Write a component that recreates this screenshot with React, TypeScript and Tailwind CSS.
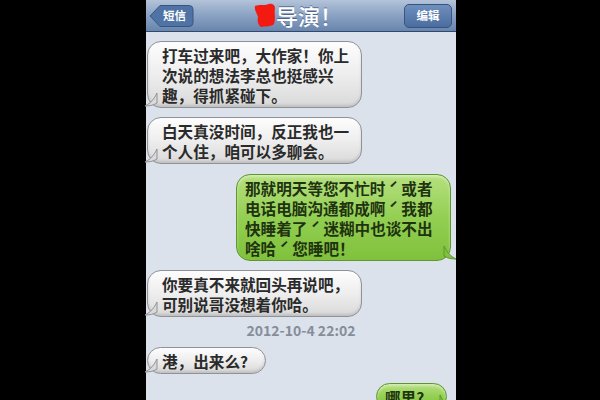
import React from 'react';

interface Msg {
  side: 'left' | 'right';
  lines: React.ReactNode[];
  mt: string;
  width?: string;
}

const Tick = () => <span className="inline-block w-[16px] text-center">ˊ</span>;

const messages: Msg[] = [
  {
    side: 'left',
    mt: 'mt-[9px]',
    width: 'w-[215px]',
    lines: ['打车过来吧，大作家！你上', '次说的想法李总也挺感兴', '趣，得抓紧碰下。'],
  },
  {
    side: 'left',
    mt: 'mt-[9px]',
    width: 'w-[215px]',
    lines: ['白天真没时间，反正我也一', '个人住，咱可以多聊会。'],
  },
  {
    side: 'right',
    mt: 'mt-[10px]',
    width: 'w-[215px]',
    lines: [
      <>那就明天等您不忙时<Tick />或者</>,
      <>电话电脑沟通都成啊<Tick />我都</>,
      <>快睡着了<Tick />迷糊中也谈不出</>,
      <>啥哈<Tick />您睡吧！</>,
    ],
  },
  {
    side: 'left',
    mt: 'mt-[9px]',
    width: 'w-[215px]',
    lines: ['你要真不来就回头再说吧，', '可别说哥没想着你哈。'],
  },
];

function Bubble({ side, lines, width }: { side: 'left' | 'right'; lines: React.ReactNode[]; width?: string }) {
  const left = side === 'left';
  return (
    <div className={`relative ${width ?? ''}`}>
      <div
        className={`rounded-[14px] border pb-[2px] pt-[3px] text-[15.6px] leading-[20px] font-bold ${
          left
            ? 'border-[#8f9296] bg-gradient-to-b from-[#fdfdfd] via-[#eeeeee] to-[#d9d9d9] pl-[14px] pr-[8px] text-[#2a2a2a] shadow-[inset_0_-2px_3px_rgba(0,0,0,0.12)]'
            : 'border-[#5f9630] bg-gradient-to-b from-[#b5e07e] via-[#93cf52] to-[#7fc13b] pl-[8px] pr-[10px] text-[#1f3310] shadow-[inset_0_2px_3px_rgba(255,255,255,0.45)]'
        }`}
      >
        {lines.map((l, i) => (
          <div key={i} className="whitespace-nowrap">
            {l}
          </div>
        ))}
      </div>
      {left ? (
        <svg className="absolute -left-[3px] bottom-[1px]" width="14" height="14" viewBox="0 0 14 14">
          <path d="M13 0 C10 6 7 10 1 13 C6 13 10 12 13 10 Z" fill="#dadada" stroke="#8f9296" strokeWidth="1" />
        </svg>
      ) : (
        <svg className="absolute -right-[6px] bottom-[1px]" width="14" height="14" viewBox="0 0 14 14">
          <path d="M1 0 C4 6 7 10 13 13 C8 13 4 12 1 10 Z" fill="#80c23c" stroke="#5f9630" strokeWidth="1" />
        </svg>
      )}
    </div>
  );
}

export default function App() {
  return (
    <div
      className="flex h-[400px] w-[600px] overflow-hidden bg-black"
      style={{ fontFamily: '"Noto Sans CJK SC", "Liberation Sans", sans-serif' }}
    >
      <div className="ml-[146px] flex h-full w-[310px] flex-col bg-[#dbe2ec]">
        {/* Nav bar */}
        <div className="relative flex h-[32px] shrink-0 items-center justify-between border-b border-[#2f4a6e] bg-gradient-to-b from-[#b3c3d9] via-[#8aa2c3] to-[#6985ad] px-[2px]">
          <div className="relative ml-[1px] flex h-[24px] w-[45px] items-center">
            <svg className="absolute inset-0" width="45" height="24" viewBox="0 0 45 24">
              <path
                d="M1 12 L11 1.5 H40 Q44 1.5 44 5.5 V18.5 Q44 22.5 40 22.5 H11 Z"
                fill="#4f73a5"
                stroke="#38557f"
                strokeWidth="1"
              />
            </svg>
            <span className="relative ml-[14px] text-[11.5px] font-bold text-white">短信</span>
          </div>
          <div className="absolute left-[108px] top-[1px] flex items-center">
            <svg width="22" height="25" viewBox="0 0 22 25">
              <path d="M1 3 C5 1 10 3 15 1 C18 0 21 2 21 5 C20 10 22 16 20 21 C17 24 12 23 7 24 C4 22 3 18 4 14 C3 10 0 7 1 3 Z" fill="#f31a12" />
            </svg>
            <span className="text-[22px] font-medium leading-[28px] text-white [text-shadow:0_-1px_0_rgba(40,60,90,0.6)]">导演！</span>
          </div>
          <div className="mr-[2px] flex h-[24px] w-[48px] items-center justify-center rounded-[5px] border border-[#38557f] bg-gradient-to-b from-[#6f8fbd] to-[#4a6d9f]">
            <span className="text-[11.5px] font-bold text-white">编辑</span>
          </div>
        </div>

        {/* Messages */}
        <div className="flex flex-col px-[1px]">
          {messages.map((m, i) => (
            <div key={i} className={`flex ${m.mt} ${m.side === 'left' ? 'justify-start' : 'justify-end pr-[4px]'}`}>
              <Bubble side={m.side} lines={m.lines} width={m.width} />
            </div>
          ))}
          <div className="mt-[4px] text-center text-[14px] leading-[18px] font-bold text-[#868d99]">2012-10-4 22:02</div>
          <div className="mt-[8px] flex justify-start">
            <Bubble side="left" lines={['港，出来么?']} width="w-[119px]" />
          </div>
          <div className="mt-[9px] flex justify-end pr-[8px]">
            <Bubble side="right" lines={['哪里?']} width="w-[71px]" />
          </div>
        </div>
      </div>
    </div>
  );
}
